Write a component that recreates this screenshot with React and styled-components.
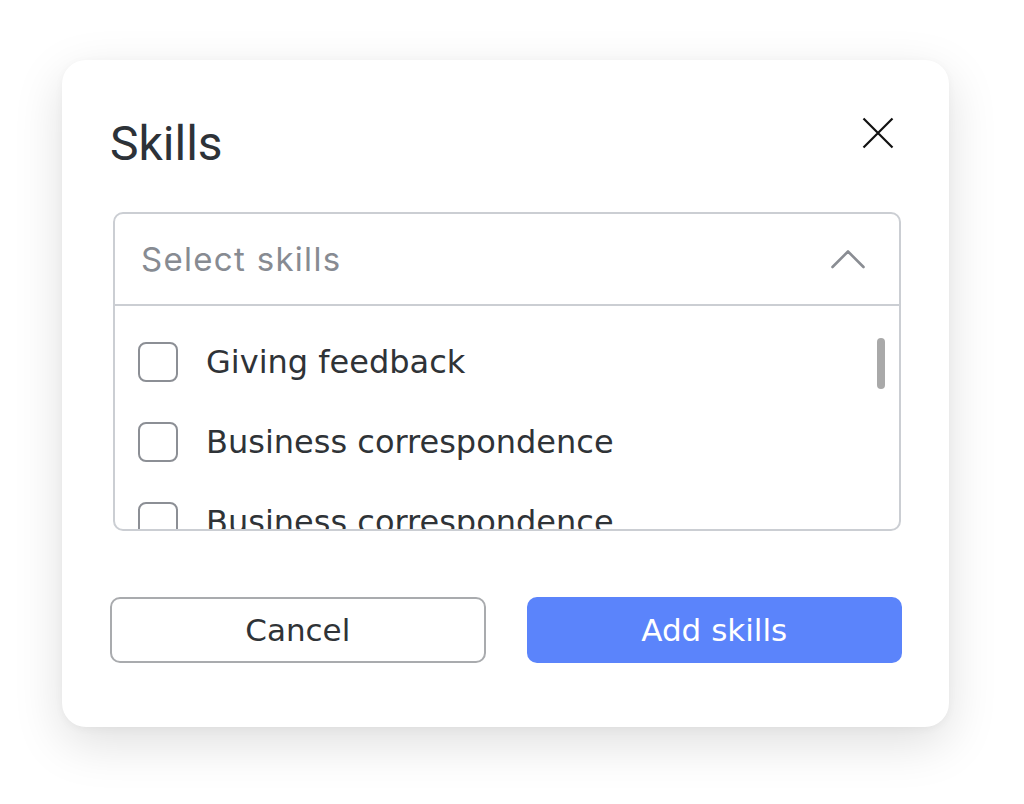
import React from "react";
import styled, { createGlobalStyle } from "styled-components";

const GlobalStyle = createGlobalStyle`
  html, body {
    margin: 0;
    padding: 0;
    background: #ffffff;
  }
  body {
    width: 1024px;
    height: 804px;
    overflow: hidden;
    font-family: "DejaVu Sans", "Open Sans", sans-serif;
  }
`;

const Page = styled.div`
  width: 1024px;
  height: 804px;
  padding: 60px 0 0 62px;
  box-sizing: border-box;
`;

const Card = styled.div`
  width: 887px;
  height: 667px;
  box-sizing: border-box;
  padding: 56px 47px 0 48px;
  background: #ffffff;
  border-radius: 24px;
  box-shadow: 0 16px 50px rgba(0, 0, 0, 0.13), 0 2px 8px rgba(0, 0, 0, 0.04);
  display: flex;
  flex-direction: column;
`;

const Header = styled.div`
  display: flex;
  justify-content: space-between;
  align-items: flex-start;
  height: 56px;
`;

const Title = styled.h2`
  margin: 0;
  font-family: Roboto, "Liberation Sans", sans-serif;
  font-weight: 400;
  font-size: 48px;
  line-height: 56px;
  color: #2d3238;
`;

const CloseButton = styled.button`
  border: none;
  background: none;
  padding: 0;
  margin: 1px 8px 0 0;
  width: 32px;
  height: 32px;
  display: flex;
  cursor: pointer;
`;

const SelectBox = styled.div`
  margin: 40px 1px 0 3px;
  height: 319px;
  box-sizing: border-box;
  border: 2px solid #cbced3;
  border-radius: 10px;
  display: flex;
  flex-direction: column;
  overflow: hidden;
`;

const SelectHeader = styled.div`
  height: 90px;
  flex-shrink: 0;
  display: flex;
  align-items: center;
  justify-content: space-between;
  padding: 0 34px 0 26px;
  border-bottom: 2px solid #cbced3;
`;

const Placeholder = styled.span`
  font-family: Inter, "Open Sans", sans-serif;
  font-size: 33px;
  color: #878b92;
  letter-spacing: 1.3px;
`;

const OptionList = styled.div`
  position: relative;
  flex: 1;
  overflow: hidden;
  padding: 16px 0 0 23px;
`;

const Option = styled.label`
  display: flex;
  align-items: center;
  height: 80px;
  gap: 28px;
  font-size: 32px;
  color: #2f3337;
  cursor: pointer;
`;

const Box = styled.span`
  width: 40px;
  height: 40px;
  box-sizing: border-box;
  border: 2px solid #8c8f95;
  border-radius: 8px;
  flex-shrink: 0;
`;

const Thumb = styled.div`
  position: absolute;
  top: 32px;
  right: 14px;
  width: 8px;
  height: 51px;
  border-radius: 4px;
  background: #a9a9a9;
`;

const Actions = styled.div`
  margin-top: 66px;
  display: grid;
  grid-template-columns: 1fr 1fr;
  gap: 41px;
`;

const Button = styled.button`
  height: 66px;
  box-sizing: border-box;
  border-radius: 10px;
  font-family: "DejaVu Sans", "Open Sans", sans-serif;
  font-size: 31px;
  cursor: pointer;
  border: ${(p) => (p.$primary ? "none" : "2px solid #a9abae")};
  background: ${(p) => (p.$primary ? "#5b84fb" : "#ffffff")};
  color: ${(p) => (p.$primary ? "#ffffff" : "#2f3337")};
`;

const skills = ["Giving feedback", "Business correspondence", "Business correspondence"];

export default function App() {
  return (
    <>
      <GlobalStyle />
      <Page>
        <Card>
          <Header>
            <Title>Skills</Title>
            <CloseButton aria-label="Close">
              <svg width="32" height="32" viewBox="0 0 32 32">
                <path d="M1.5 1.5 L30.5 30.5 M30.5 1.5 L1.5 30.5" stroke="#111" strokeWidth="2.2" fill="none" />
              </svg>
            </CloseButton>
          </Header>
          <SelectBox>
            <SelectHeader>
              <Placeholder>Select skills</Placeholder>
              <svg width="34" height="20" viewBox="0 0 34 20">
                <path d="M1.5 18 L17 2.5 L32.5 18" stroke="#8a8d93" strokeWidth="2.6" fill="none" strokeLinecap="round" strokeLinejoin="round" />
              </svg>
            </SelectHeader>
            <OptionList>
              {skills.map((s, i) => (
                <Option key={i}>
                  <Box />
                  {s}
                </Option>
              ))}
              <Thumb />
            </OptionList>
          </SelectBox>
          <Actions>
            <Button>Cancel</Button>
            <Button $primary>Add skills</Button>
          </Actions>
        </Card>
      </Page>
    </>
  );
}
